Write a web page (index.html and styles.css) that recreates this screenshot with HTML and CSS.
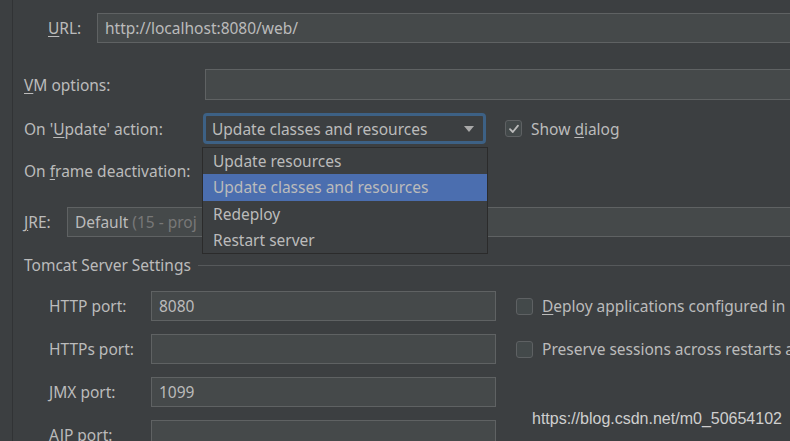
FILE: index.html
```html
<!DOCTYPE html>
<html>
<head>
<meta charset="utf-8">
<link rel="stylesheet" href="styles.css">
</head>
<body>
<div class="frame">
  <div class="content">
    <div class="row r-url">
      <span class="label lbl-url"><u>U</u>RL:</span>
      <div class="field grow">http://localhost:8080/web/</div>
    </div>
    <div class="row r-vm">
      <span class="label lbl-wide"><u>V</u>M options:</span>
      <div class="field grow vm"></div>
    </div>
    <div class="row r-upd">
      <span class="label lbl-wide">On '<u>U</u>pdate' action:</span>
      <div class="combo">
        <span>Update classes and resources</span>
        <span class="arrow"></span>
      </div>
      <label class="check checked-row">
        <span class="box on"><svg width="12" height="12" viewBox="0 0 12 12"><path d="M2 6.2 L4.8 9 L10 2.6" fill="none" stroke="#bbbbbb" stroke-width="1.8" stroke-linecap="round" stroke-linejoin="round"/></svg></span>
        <span>Show <u>d</u>ialog</span>
      </label>
    </div>
    <div class="row r-frame">
      <span class="label lbl-wide">On <u>f</u>rame deactivation:</span>
    </div>
    <div class="row r-jre">
      <span class="label lbl-jre"><u>J</u>RE:</span>
      <div class="field grow jre">Default <span class="dim">(15 - proj</span></div>
    </div>
    <div class="row r-title">
      <span class="title">Tomcat Server Settings</span>
      <span class="rule"></span>
    </div>
    <div class="row r-port first">
      <span class="label lbl-port">HTTP port:</span>
      <div class="field port">8080</div>
      <label class="check">
        <span class="box"></span>
        <span><u>D</u>eploy applications configured in</span>
      </label>
    </div>
    <div class="row r-port">
      <span class="label lbl-port">HTTPs port:</span>
      <div class="field port"></div>
      <label class="check">
        <span class="box"></span>
        <span>Preserve sessions across restarts a</span>
      </label>
    </div>
    <div class="row r-port">
      <span class="label lbl-port">JMX port:</span>
      <div class="field port">1099</div>
    </div>
    <div class="row r-port">
      <span class="label lbl-port">AJP port:</span>
      <div class="field port"></div>
    </div>
  </div>
  <ul class="popup">
    <li>Update resources</li>
    <li class="sel">Update classes and resources</li>
    <li>Redeploy</li>
    <li>Restart server</li>
  </ul>
  <div class="watermark">https://blog.csdn.net/m0_50654102</div>
</div>
</body>
</html>
```
FILE: styles.css
```css
html, body {
  margin: 0;
  padding: 0;
  background: #3c3f41;
  width: 790px;
  height: 441px;
  overflow: hidden;
}
.frame {
  position: relative;
  width: 790px;
  height: 441px;
  font-family: "Noto Sans", "Open Sans", sans-serif;
  font-size: 15.5px;
  color: #bbbbbb;
  overflow: hidden;
}
.content {
  margin-left: 12px;
  border-left: 1px solid #313335;
  height: 441px;
  padding-left: 11px;
  display: flex;
  flex-direction: column;
  box-sizing: border-box;
}
u { text-decoration: underline; text-underline-offset: 2px; }
.row {
  display: flex;
  align-items: center;
  flex: none;
  white-space: nowrap;
}
.r-url { margin-top: 13px; height: 30px; }
.r-vm { margin-top: 26px; height: 31px; }
.r-upd { margin-top: 13px; height: 31px; }
.r-frame { margin-top: 12px; height: 30px; }
.r-jre { margin-top: 21px; height: 30px; }
.r-title { margin-top: 19px; height: 18px; }
.r-port { margin-top: 13px; height: 30px; }
.r-port.first { margin-top: 17px; }

.label { flex: none; }
.lbl-url { margin-left: 24px; width: 49px; }
.lbl-wide { width: 181px; }
.lbl-jre { width: 43px; }
.lbl-port { margin-left: 25px; width: 102px; }

.field {
  box-sizing: border-box;
  height: 100%;
  background: #45494a;
  border: 1px solid #5f6263;
  padding-left: 7px;
  display: flex;
  align-items: center;
}
.grow { flex: 1; margin-right: -20px; }
.vm { height: 31px; }
.dim { color: #787878; margin-left: 4px; }
.port { width: 345px; flex: none; }

.combo {
  box-sizing: border-box;
  margin-left: -2px;
  width: 283px;
  height: 31px;
  border: 3px solid #3d6185;
  border-radius: 4px;
  background: #3c3f41;
  display: flex;
  align-items: center;
  justify-content: space-between;
  padding: 0 9px 0 6px;
}
.arrow {
  width: 0;
  height: 0;
  border-left: 5.5px solid transparent;
  border-right: 5.5px solid transparent;
  border-top: 6px solid #a9a9a9;
}

.check {
  display: flex;
  align-items: center;
  gap: 9px;
  margin-left: 19px;
}
.checked-row { margin-left: 19px; }
.box {
  box-sizing: border-box;
  width: 17px;
  height: 17px;
  border: 1px solid #5e6163;
  border-radius: 3px;
  background: #43494a;
  display: flex;
  align-items: center;
  justify-content: center;
  flex: none;
}
.r-port .check { margin-left: 20px; }

.title { flex: none; }
.rule {
  flex: 1;
  height: 1px;
  background: #56595b;
  margin-left: 7px;
  margin-right: -20px;
}

.popup {
  position: absolute;
  left: 202px;
  top: 147px;
  width: 286px;
  height: 107px;
  box-sizing: border-box;
  margin: 0;
  padding: 0;
  list-style: none;
  background: #3c3f41;
  border: 1px solid #2b2b2b;
}
.popup li {
  height: 26.3px;
  line-height: 26px;
  padding-left: 10px;
  white-space: nowrap;
}
.popup li.sel { background: #4b6eaf; }

.watermark {
  position: absolute;
  left: 532px;
  top: 410px;
  font-family: "Liberation Sans", Arial, sans-serif;
  font-size: 16px;
  color: #cfcfcf;
}
```
